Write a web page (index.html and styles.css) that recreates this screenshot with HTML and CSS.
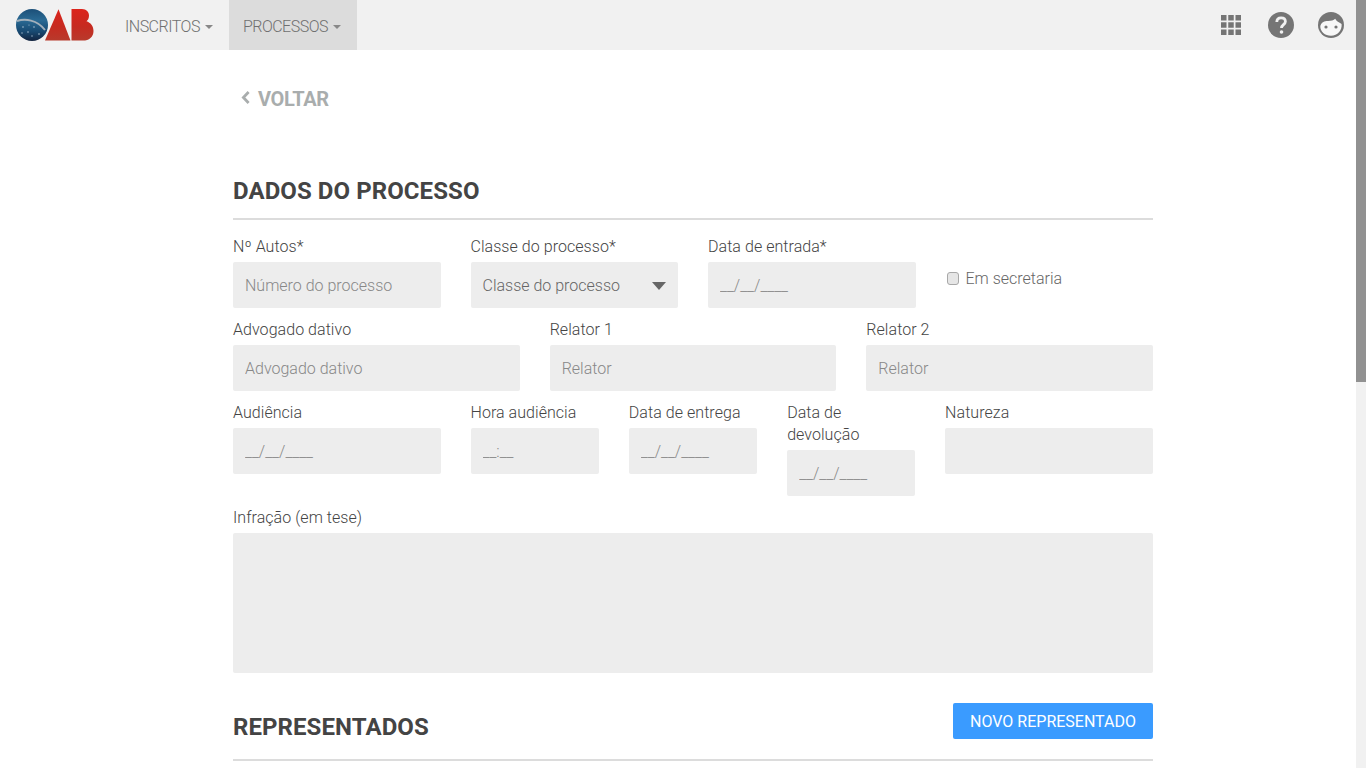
FILE: index.html
```html
<!DOCTYPE html>
<html lang="pt">
<head>
<meta charset="utf-8">
<title>OAB</title>
<link rel="stylesheet" href="styles.css">
</head>
<body>
<div class="shell">
  <div class="page">
    <nav class="navbar">
      <a class="brand" href="#" aria-label="OAB">
        <svg width="80" height="34" viewBox="0 0 80 34">
          <defs>
            <linearGradient id="globe" x1="0" y1="0" x2="0" y2="1">
              <stop offset="0" stop-color="#1c4f78"/>
              <stop offset="0.35" stop-color="#2a6a94"/>
              <stop offset="0.7" stop-color="#184a72"/>
              <stop offset="1" stop-color="#12233f"/>
            </linearGradient>
            <linearGradient id="red" x1="0" y1="0" x2="0" y2="1">
              <stop offset="0" stop-color="#dc241c"/>
              <stop offset="0.55" stop-color="#c62a20"/>
              <stop offset="1" stop-color="#b83a2c"/>
            </linearGradient>
          </defs>
          <circle cx="17" cy="17" r="16" fill="url(#globe)"/>
          <path d="M2 13 C10 10.500 22 11.500 30 22" fill="none" stroke="#a3b0bb" stroke-width="2"/>
          <g fill="#a9bfd2"><circle cx="8" cy="19" r=".8"/><circle cx="13" cy="24" r=".8"/><circle cx="19" cy="19" r=".8"/><circle cx="24" cy="26" r=".8"/><circle cx="7" cy="25" r=".7"/><circle cx="17" cy="28" r=".7"/><circle cx="14" cy="17" r=".6"/></g>
          <path d="M43.500 1.200 L55.500 32.600 L30 32.600 Z" fill="url(#red)"/>
          <path d="M56.500 1 H67 C71.500 1 74 4 74 7.500 C74 10.500 72.800 12.300 71.500 13.200 C75.500 14.500 78.500 18 78.500 23 C78.500 29 74 32.600 68 32.600 H56.500 Z" fill="url(#red)"/>
        </svg>
      </a>
      <ul class="nav-menu">
        <li><a class="nav-link" href="#">INSCRITOS <span class="caret"></span></a></li>
        <li><a class="nav-link active" href="#">PROCESSOS <span class="caret"></span></a></li>
      </ul>
      <div class="nav-icons">
        <svg class="icon-grid" width="20" height="20" viewBox="0 0 20 20" fill="#757575" aria-label="Aplicativos">
          <rect x="0" y="0" width="5.500" height="5.500"/><rect x="7.250" y="0" width="5.500" height="5.500"/><rect x="14.500" y="0" width="5.500" height="5.500"/>
          <rect x="0" y="7.250" width="5.500" height="5.500"/><rect x="7.250" y="7.250" width="5.500" height="5.500"/><rect x="14.500" y="7.250" width="5.500" height="5.500"/>
          <rect x="0" y="14.500" width="5.500" height="5.500"/><rect x="7.250" y="14.500" width="5.500" height="5.500"/><rect x="14.500" y="14.500" width="5.500" height="5.500"/>
        </svg>
        <svg width="26" height="26" viewBox="0 0 26 26" aria-label="Ajuda">
          <circle cx="13" cy="13" r="13" fill="#757575"/>
          <path d="M8.800 10 C8.800 7.300 10.700 5.800 13.100 5.800 C15.600 5.800 17.400 7.300 17.400 9.600 C17.400 12.600 13.500 12.800 13.500 16" fill="none" stroke="#f1f1f1" stroke-width="2.800"/>
          <circle cx="13.500" cy="20" r="1.800" fill="#f1f1f1"/>
        </svg>
        <svg width="26" height="26" viewBox="0 0 26 26" aria-label="Perfil">
          <circle cx="13" cy="13" r="13" fill="#757575"/>
          <path d="M2.300 14 C3 11 5.500 8.800 9 9 C12.500 9.200 15.500 8.500 17.200 6.800 C18.500 9.300 21 10.500 23.600 12 C24.300 18.500 19.500 23.800 13 23.800 C7 23.800 2 19.500 2.300 14 Z" fill="#f7f7f7"/>
          <circle cx="8" cy="15" r="1.600" fill="#757575"/>
          <circle cx="18" cy="15" r="1.600" fill="#757575"/>
        </svg>
      </div>
    </nav>
    <main class="content">
      <a class="back" href="#"><svg class="back-chevron" width="9" height="13" viewBox="0 0 9 13"><path d="M7.600 1 L2.400 6.500 L7.600 12" fill="none" stroke="#a9adad" stroke-width="2.800"/></svg><span>VOLTAR</span></a>
      <h2 class="section-title first">DADOS DO PROCESSO</h2>
      <form class="form">
        <div class="row">
          <div class="field span3"><label class="label">Nº Autos*</label><input class="input" placeholder="Número do processo"></div>
          <div class="field span3"><label class="label">Classe do processo*</label><div class="input select"><span>Classe do processo</span><i class="select-arrow"></i></div></div>
          <div class="field span3"><label class="label">Data de entrada*</label><input class="input" placeholder="__/__/____"></div>
          <div class="field span3 check-field"><label class="check"><input class="checkbox" type="checkbox"><span>Em secretaria</span></label></div>
        </div>
        <div class="row">
          <div class="field span4"><label class="label">Advogado dativo</label><input class="input" placeholder="Advogado dativo"></div>
          <div class="field span4"><label class="label">Relator 1</label><input class="input" placeholder="Relator"></div>
          <div class="field span4"><label class="label">Relator 2</label><input class="input" placeholder="Relator"></div>
        </div>
        <div class="row">
          <div class="field span3"><label class="label">Audiência</label><input class="input" placeholder="__/__/____"></div>
          <div class="field span2"><label class="label">Hora audiência</label><input class="input" placeholder="__:__"></div>
          <div class="field span2"><label class="label">Data de entrega</label><input class="input" placeholder="__/__/____"></div>
          <div class="field span2 devolucao"><label class="label">Data de devolução</label><input class="input" placeholder="__/__/____"></div>
          <div class="field span3 natureza"><label class="label">Natureza</label><input class="input"></div>
        </div>
        <div class="row">
          <div class="field span12"><label class="label">Infração (em tese)</label><textarea class="input textarea"></textarea></div>
        </div>
      </form>
      <div class="section-head">
        <h2 class="section-title">REPRESENTADOS</h2>
        <button class="btn-primary" type="button">NOVO REPRESENTADO</button>
      </div>
      <div class="section-rule"></div>
    </main>
  </div>
  <div class="scrollbar"><div class="scroll-thumb"></div></div>
</div>
</body>
</html>
```
FILE: styles.css
```css
* { box-sizing: border-box; }
html, body { margin: 0; height: 100%; overflow: hidden; }
body { font-family: Roboto, "Liberation Sans", sans-serif; font-size: 16px; color: #666; background: #fff; }
.shell { display: flex; height: 768px; overflow: hidden; }
.page { flex: 1; min-width: 0; }
.scrollbar { width: 10px; background: #f1f1f1; }
.scroll-thumb { height: 382px; background: #919191; }

.navbar { display: flex; align-items: center; height: 50px; background: #f1f1f1; }
.brand { display: block; width: 80px; height: 34px; margin: 0 16px 0 15px; }
.brand svg { display: block; }
.nav-menu { display: flex; list-style: none; margin: 0; padding: 0; height: 50px; }
.nav-link { display: flex; align-items: center; gap: 4px; height: 50px; padding: 2px 16px 0 14px; color: #707070; font-size: 16px; font-weight: 300; text-decoration: none; letter-spacing: -.5px; }
.nav-link.active { background: #dcdcdc; }
.caret { display: inline-block; width: 0; height: 0; margin-top: 1px; margin-left: 1px; border-top: 4px solid #888; border-left: 4px solid transparent; border-right: 4px solid transparent; }
.nav-icons { display: flex; align-items: center; gap: 24px; margin-left: auto; padding-right: 12px; }
.nav-icons svg { display: block; }
.icon-grid { margin-right: 3px; }

.content { width: 920px; margin-left: 233px; padding-top: 38px; }
.back { display: flex; align-items: center; height: 22px; color: #a9adad; font-size: 20px; font-weight: 700; text-decoration: none; padding-left: 8px; }
.back-chevron { margin-right: 8px; margin-top: -3px; }
.back span { letter-spacing: -.35px; }
.section-title { margin: 0; font-size: 24px; line-height: 28px; font-weight: 700; color: #444; letter-spacing: .08px; }
.section-title.first { margin-top: 67px; padding-bottom: 13px; border-bottom: 2px solid #dcdcdc; }

.form { padding-top: 16px; }
.row { display: grid; grid-template-columns: repeat(12, minmax(0, 1fr)); column-gap: 30px; margin-bottom: 11px; }
.span2 { grid-column: span 2; }
.span3 { grid-column: span 3; }
.span4 { grid-column: span 4; }
.span12 { grid-column: span 12; }
.devolucao { margin-right: .4px; }
.natureza { margin-left: -.4px; }
.label { display: block; font-size: 16px; font-weight: 300; line-height: 22px; color: #444; margin-bottom: 4px; letter-spacing: .05px; }
.input { display: block; width: 100%; height: 46px; padding: 0 12px; border: 0; border-radius: 2px; outline: 0; background: #ededed; font: 300 16px Roboto, sans-serif; color: #666; }
.input::placeholder { color: #888; opacity: 1; }
.select { display: flex; align-items: center; justify-content: space-between; }
.select-arrow { width: 0; height: 0; margin-top: 2px; border-top: 8px solid #666; border-left: 7.500px solid transparent; border-right: 7.500px solid transparent; }
.textarea { height: 140px; resize: none; }
.check-field { padding-top: 32px; }
.check { display: flex; align-items: center; color: #666; font-weight: 300; line-height: 22px; }
.checkbox { appearance: none; width: 12px; height: 13px; margin: 0 7px 0 1px; position: relative; top: -1px; background: #e6e6e6; border: 1px solid #a8a8a8; border-radius: 3px; }

.section-head { display: flex; justify-content: space-between; align-items: flex-start; margin-top: 30px; }
.section-head .section-title { padding-top: 10px; }
.btn-primary { width: 200px; height: 36px; border: 0; border-radius: 2px; background: #3a9bff; color: #fff; font: 16px Roboto, sans-serif; }
.section-rule { height: 2px; margin-top: 18px; background: #dcdcdc; }
```
